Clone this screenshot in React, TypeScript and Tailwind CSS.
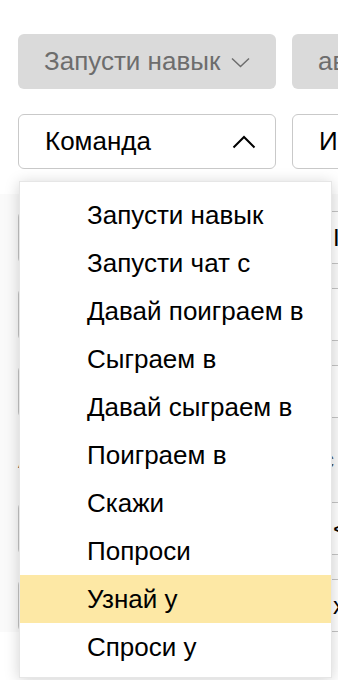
const items = [
  "Запусти навык",
  "Запусти чат с",
  "Давай поиграем в",
  "Сыграем в",
  "Давай сыграем в",
  "Поиграем в",
  "Скажи",
  "Попроси",
  "Узнай у",
  "Спроси у",
];

const active = "Узнай у";

function BackRow({ label, right }: { label?: string; right?: string }) {
  return (
    <div className="flex gap-4">
      <div className="flex h-[53px] w-[258px] shrink-0 items-center rounded-md border border-[#c4c4c4] bg-white px-6 text-[24px] text-black">
        {label}
      </div>
      <div className="flex h-[53px] w-[258px] shrink-0 items-center rounded-md border border-[#c4c4c4] bg-white px-10 text-[24px] text-black">
        {right}
      </div>
    </div>
  );
}

export default function App() {
  return (
    <div className="relative h-[680px] w-[338px] overflow-hidden bg-white font-['Liberation_Sans',Arial,sans-serif]">
      <div className="flex flex-col gap-[25px] pl-[18px] pt-[34px]">
        <div className="flex gap-4">
          <button className="flex h-[55px] w-[258px] shrink-0 items-center rounded-md bg-[#dadada] pl-[26px] text-[26px] text-[#6d6d6d]">
            Запусти навык
            <svg className="ml-[11px] mt-[1px]" width="19" height="11" viewBox="0 0 19 11" fill="none">
              <polyline points="1,1.5 9.5,9.5 18,1.5" stroke="currentColor" strokeWidth="1.5" />
            </svg>
          </button>
          <button className="flex h-[55px] w-[258px] shrink-0 items-center rounded-md bg-[#dadada] pl-[26px] text-[26px] text-[#6d6d6d]">
            автора
          </button>
        </div>
        <div className="flex gap-4">
          <div className="flex h-[55px] w-[258px] shrink-0 items-center justify-between rounded-md border-[1.5px] border-[#c9c9c9] bg-white pl-[26px] pr-[19px] text-[26px] text-black">
            Команда
            <svg width="24" height="14" viewBox="0 0 24 14" fill="none">
              <polyline points="1.5,12.5 12,2 22.5,12.5" stroke="currentColor" strokeWidth="2" />
            </svg>
          </div>
          <div className="flex h-[55px] w-[258px] shrink-0 items-center rounded-md border-[1.5px] border-[#c9c9c9] bg-white pl-[26px] text-[26px] text-black">
            Имя
          </div>
        </div>
        <div className="-ml-[18px] flex flex-col gap-6 bg-[#fafafa] pl-[18px] pt-[17px]">
          <BackRow right="I" />
          <BackRow />
          <BackRow />
          <div className="flex justify-between pr-1 text-[24px] text-[#555]">
            <span>А</span>
            <span>с</span>
          </div>
          <BackRow right="<" />
          <BackRow right="x" />
        </div>
      </div>

      <ul className="absolute left-[19px] top-[181px] h-[497px] w-[313px] border border-[#e6e6e6] bg-white pt-[9px] shadow-[0_2px_14px_rgba(0,0,0,0.18)]">
        {items.map((item) => (
          <li
            key={item}
            className={
              "flex h-[48px] items-center pl-[67px] text-[26px] text-black " +
              (item === active ? "bg-[#fde8a5]" : "")
            }
          >
            {item}
          </li>
        ))}
      </ul>
    </div>
  );
}
